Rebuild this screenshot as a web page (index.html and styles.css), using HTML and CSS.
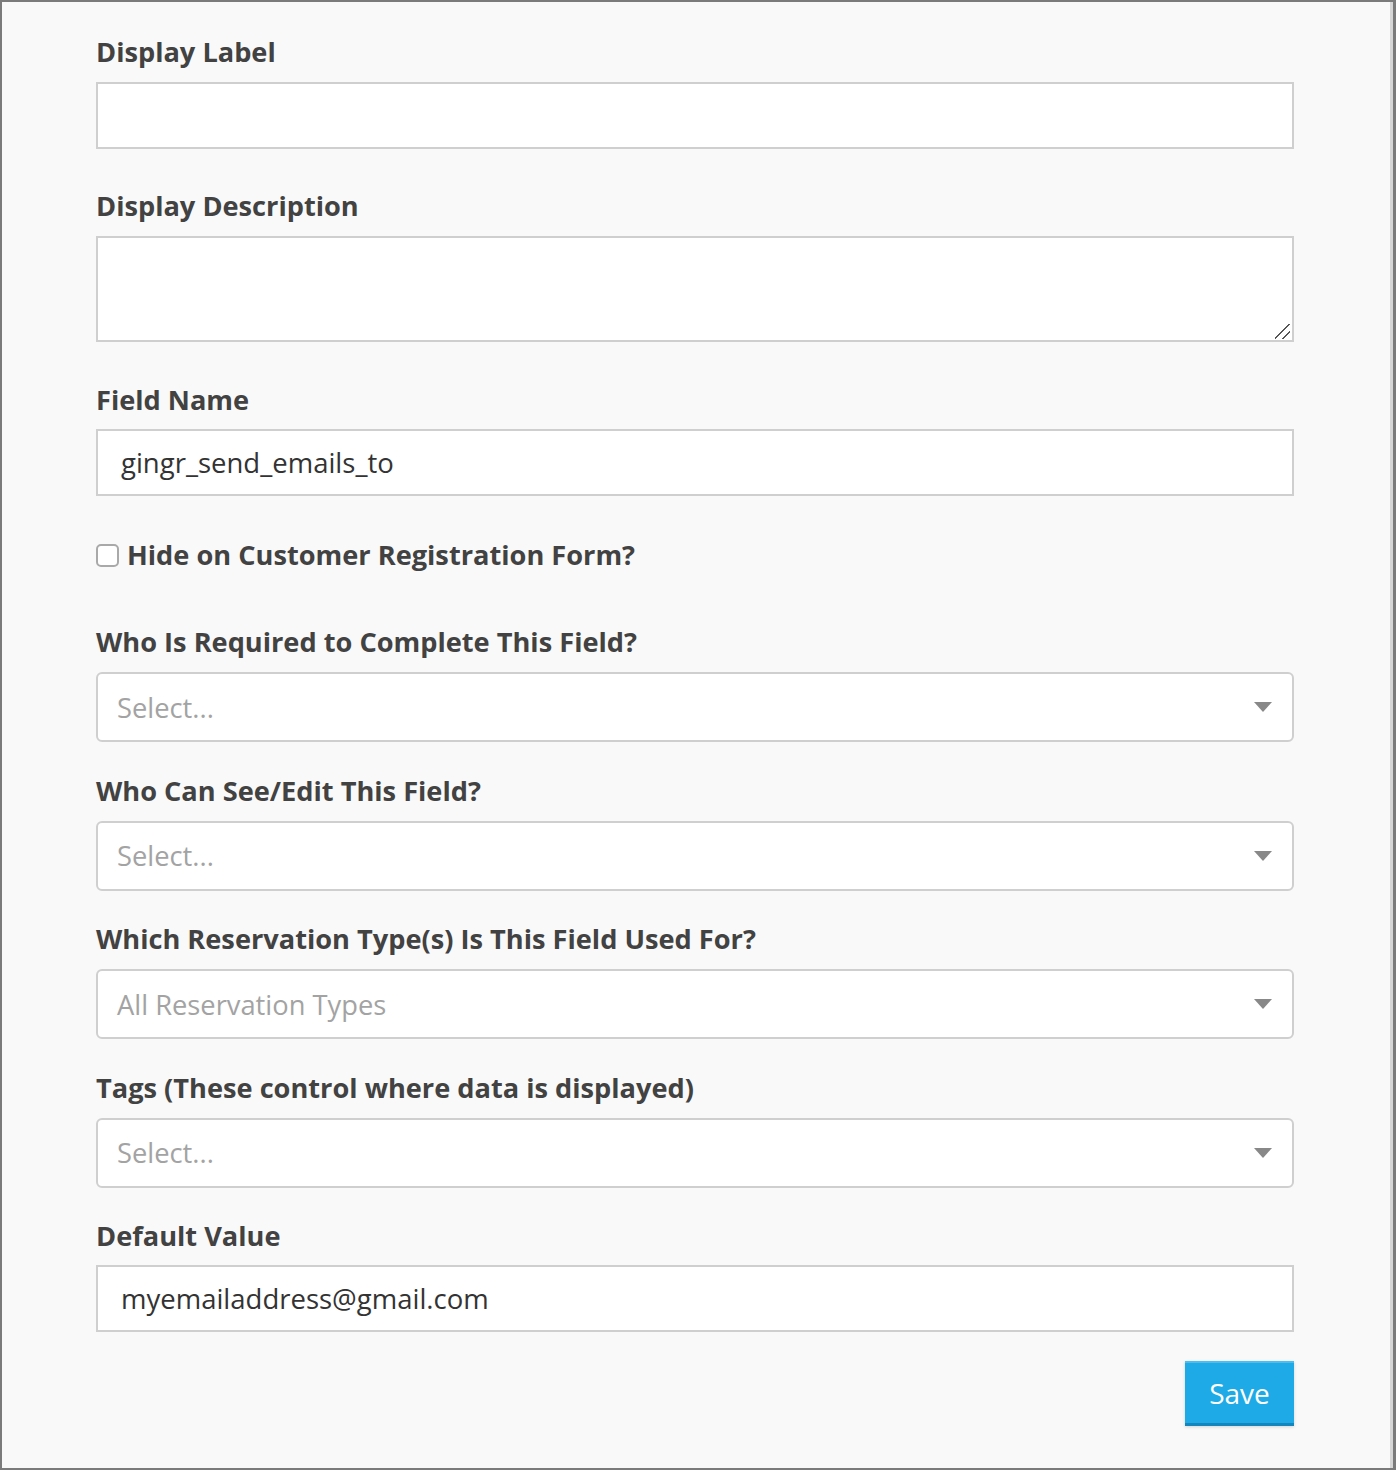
FILE: index.html
```html
<!DOCTYPE html>
<html>

<head>
    <meta charset="utf-8">
    <title>Edit Field</title>
    <link rel="stylesheet" href="styles.css">
</head>

<body>
    <div class="frame">
        <div class="field-form">
            <div class="group label-group">
                <label>Display Label</label>
                <input type="text" class="text-input">
            </div>
            <div class="group">
                <label>Display Description</label>
                <div class="area-wrap">
                    <textarea class="text-area"></textarea>
                </div>
            </div>
            <div class="group name-group">
                <label>Field Name</label>
                <input type="text" class="text-input" value="gingr_send_emails_to">
            </div>
            <div class="check-row">
                <span class="check-box"></span>
                <span class="check-label">Hide on Customer Registration Form?</span>
            </div>
            <div class="group select-group">
                <label>Who Is Required to Complete This Field?</label>
                <div class="select-box">
                    <span class="placeholder">Select...</span>
                    <span class="arrow"></span>
                </div>
            </div>
            <div class="group select-group">
                <label>Who Can See/Edit This Field?</label>
                <div class="select-box">
                    <span class="placeholder">Select...</span>
                    <span class="arrow"></span>
                </div>
            </div>
            <div class="group select-group">
                <label>Which Reservation Type(s) Is This Field Used For?</label>
                <div class="select-box">
                    <span class="placeholder">All Reservation Types</span>
                    <span class="arrow"></span>
                </div>
            </div>
            <div class="group select-group">
                <label>Tags (These control where data is displayed)</label>
                <div class="select-box">
                    <span class="placeholder">Select...</span>
                    <span class="arrow"></span>
                </div>
            </div>
            <div class="group select-group value-group">
                <label>Default Value</label>
                <input type="text" class="text-input" value="myemailaddress@gmail.com">
            </div>
            <div class="btn-row">
                <button class="save-btn">Save</button>
            </div>
        </div>
    </div>
</body>
</html>
```

FILE: styles.css
```css
* {
    margin: 0;
    padding: 0;
    box-sizing: border-box;
}
body {
    font-family: "Open Sans", "Liberation Sans", sans-serif;
    background: #fff;
}
.frame {
    height: 1470px;
    background-color: #f9f9f9;
    border: 2px solid #7b7b7b;
    border-right: 3px solid #7b7b7b;
    box-shadow: inset -3px 0 0 #d6d6d6;
    padding: 33px 99px 0 94px;
}
.field-form .group {
    margin-bottom: 41px;
}
.field-form .label-group {
    margin-bottom: 40px;
}
.field-form .name-group {
    margin-bottom: 42px;
}
.field-form .select-group {
    margin-bottom: 31.5px;
}
.field-form label,
.field-form .check-label {
    display: block;
    font-size: 27.2px;
    line-height: 34px;
    font-weight: 700;
    color: #424242;
    margin-bottom: 13px;
}
.field-form .name-group label,
.field-form .value-group label {
    margin-bottom: 12px;
}
.field-form .check-label {
    margin-bottom: 0;
}
.text-input {
    display: block;
    width: 100%;
    height: 67px;
    border: 2px solid #cfcfcf;
    background-color: #fff;
    padding: 0 23px;
    font-family: inherit;
    font-size: 27.5px;
    color: #333;
    outline: none;
}
.area-wrap {
    position: relative;
}
.area-wrap::after {
    content: "";
    position: absolute;
    right: 4px;
    bottom: 3px;
    width: 15px;
    height: 15px;
    background: linear-gradient(135deg, transparent 44%, #555 44%, #555 51%, transparent 51%, transparent 70%, #555 70%, #555 77%, transparent 77%);
    pointer-events: none;
}
.text-area {
    display: block;
    width: 100%;
    height: 106px;
    border: 2px solid #cfcfcf;
    background-color: #fff;
    font-family: inherit;
    font-size: 27.5px;
    outline: none;
    resize: none;
}
.check-row {
    display: flex;
    align-items: center;
    gap: 8px;
    margin-bottom: 53px;
}
.check-box {
    width: 23px;
    height: 23px;
    border: 2px solid #a9a9a9;
    border-radius: 5px;
    background-color: #fff;
}
.select-box {
    display: flex;
    align-items: center;
    justify-content: space-between;
    height: 70px;
    border: 2px solid #cfcfcf;
    border-radius: 6px;
    background-color: #fff;
    padding: 0 20px 0 19px;
}
.select-box .placeholder {
    font-size: 27.3px;
    color: #a3a3a3;
}
.select-box .arrow {
    width: 0;
    height: 0;
    border-left: 9px solid transparent;
    border-right: 9px solid transparent;
    border-top: 10px solid #888;
}
.btn-row {
    display: flex;
    justify-content: flex-end;
    margin-top: -3px;
}
.save-btn {
    width: 109px;
    height: 65px;
    border: none;
    border-top: 2px solid #4dbdf0;
    border-bottom: 3px solid #1387bd;
    background-color: #1eaae6;
    color: #fff;
    font-family: inherit;
    font-size: 28px;
    box-shadow: 0 1px 3px rgba(0, 0, 0, .15);
    cursor: pointer;
}
```
